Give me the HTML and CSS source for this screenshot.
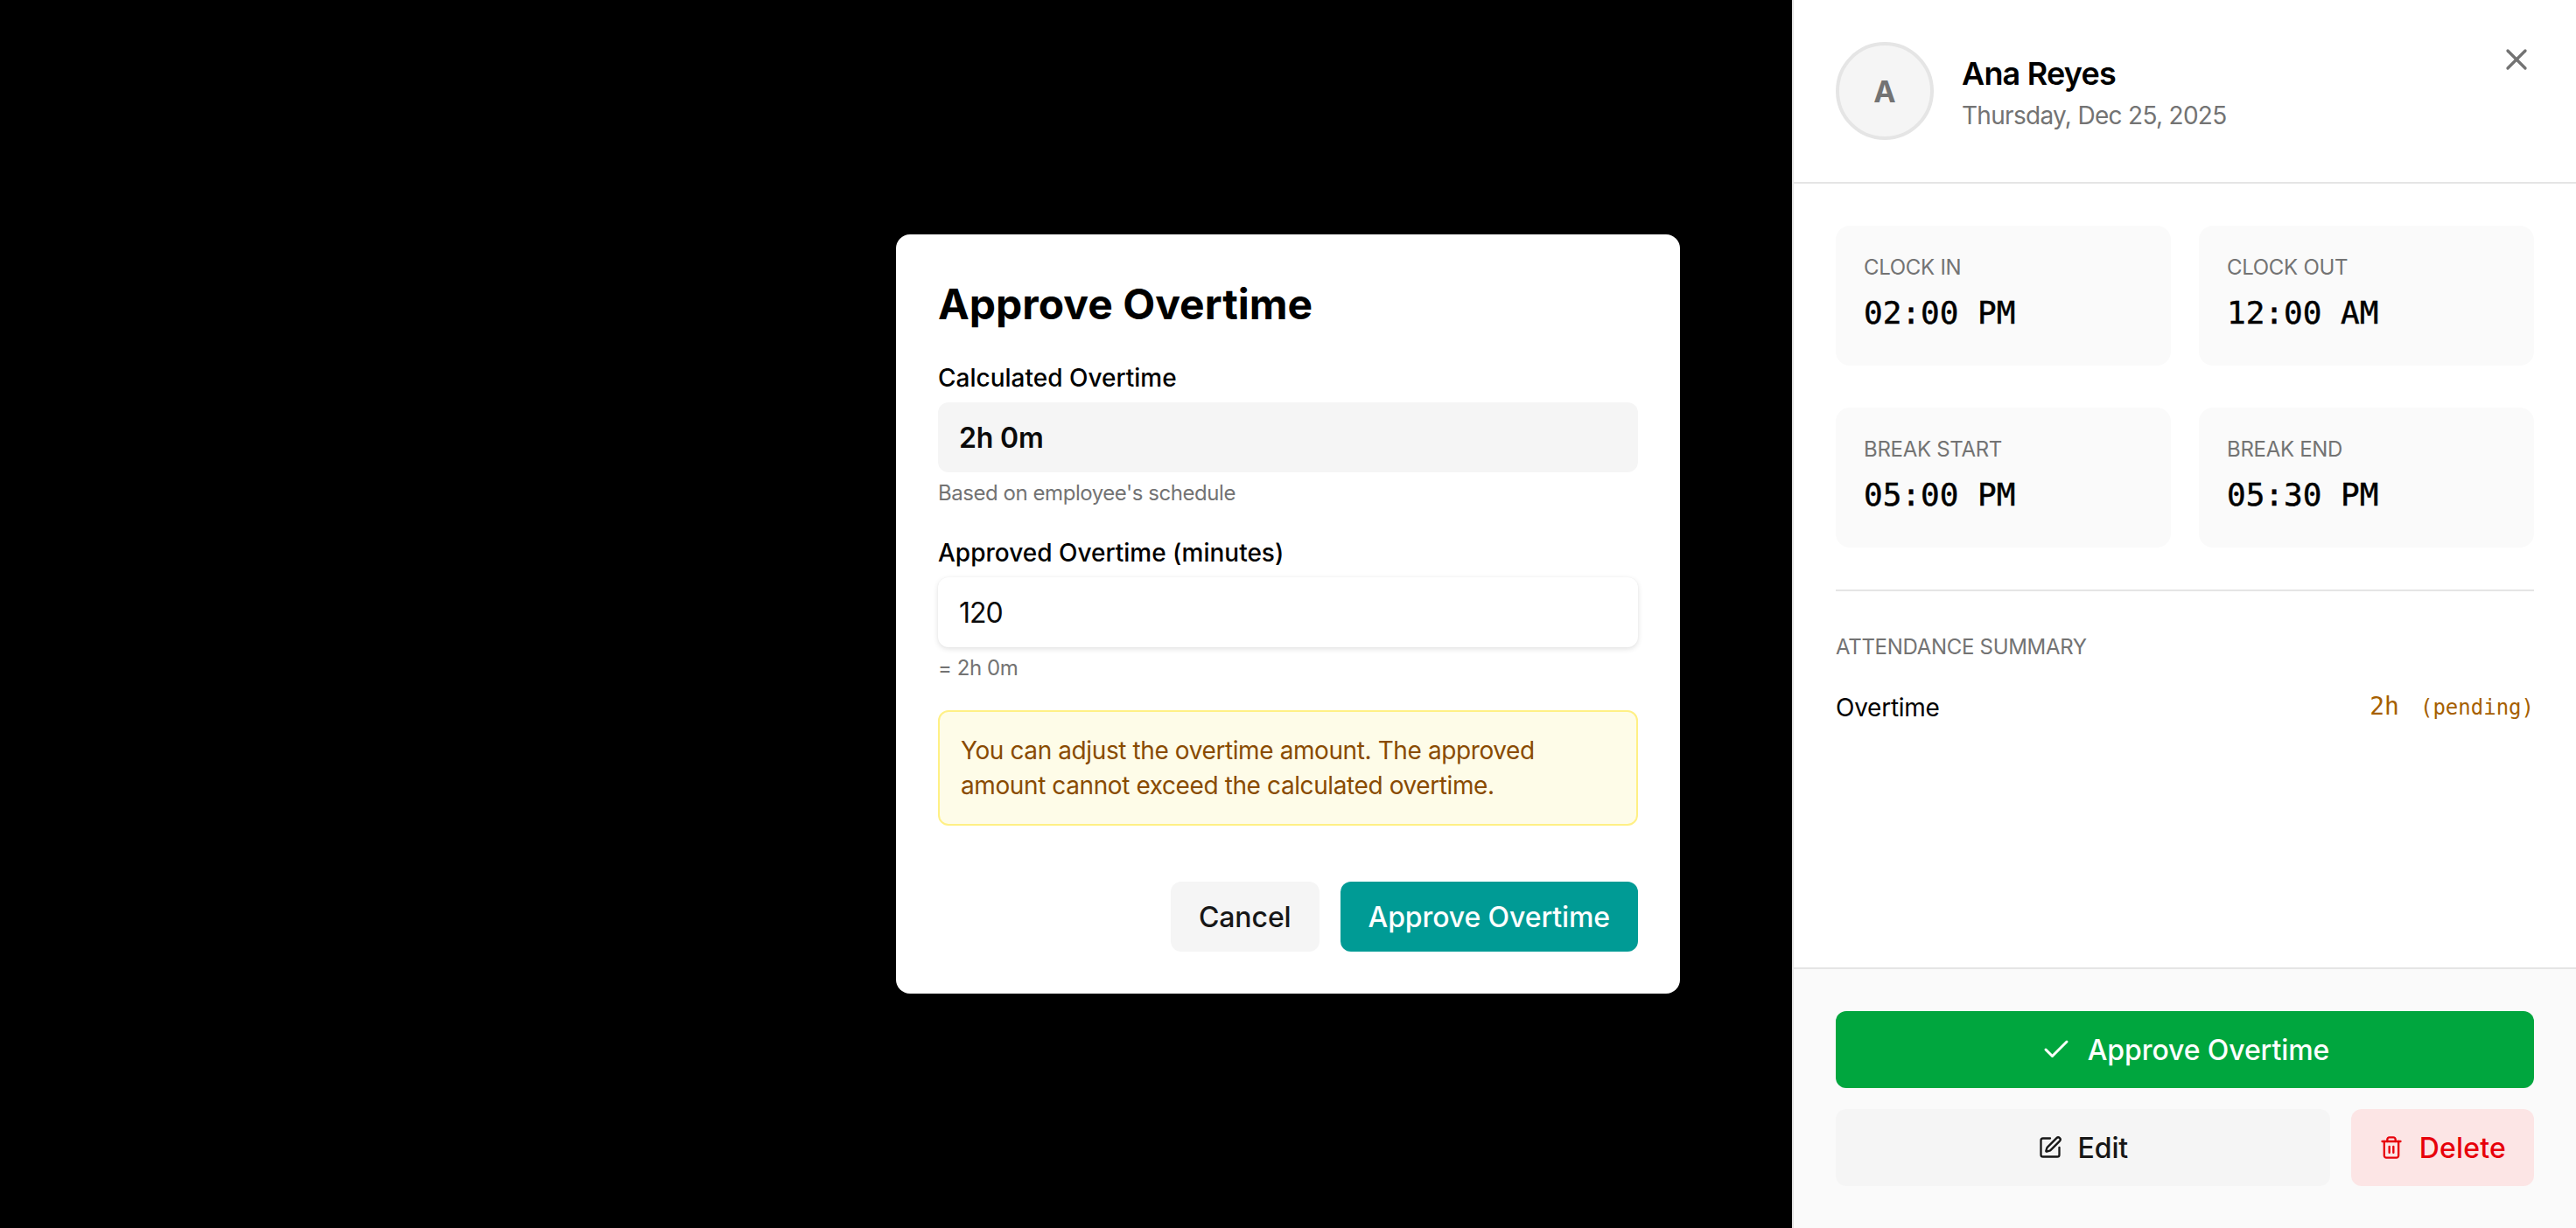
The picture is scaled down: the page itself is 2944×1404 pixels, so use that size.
FILE: index.html
```html
<!DOCTYPE html>
<html lang="en">
<head>
  <meta charset="UTF-8" />
  <title>Approve Overtime</title>
  <link rel="stylesheet" href="styles.css">
</head>
<body>
  <div class="overlay">
    <div class="modal">
      <h2>Approve Overtime</h2>

      <label class="field-label">Calculated Overtime</label>
      <div class="calc-box">2h 0m</div>
      <p class="hint">Based on employee's schedule</p>

      <label class="field-label label-gap" for="approved">Approved Overtime (minutes)</label>
      <input class="minutes" type="text" id="approved" value="120">
      <p class="hint">= 2h 0m</p>

      <div class="notice">You can adjust the overtime amount. The approved amount cannot exceed the calculated overtime.</div>

      <div class="modal-actions">
        <button class="btn btn-gray btn-cancel">Cancel</button>
        <button class="btn btn-teal">Approve Overtime</button>
      </div>
    </div>
  </div>

  <aside class="panel">
    <header class="panel-head">
      <div class="avatar">A</div>
      <div>
        <div class="name">Ana Reyes</div>
        <div class="date">Thursday, Dec 25, 2025</div>
      </div>
      <svg class="close" viewBox="0 0 24 24"><path d="M18 6 6 18"/><path d="m6 6 12 12"/></svg>
    </header>

    <div class="panel-body">
      <div class="times">
        <div class="time-card">
          <div class="time-label">CLOCK IN</div>
          <div class="time-value">02:00 PM</div>
        </div>
        <div class="time-card">
          <div class="time-label">CLOCK OUT</div>
          <div class="time-value">12:00 AM</div>
        </div>
        <div class="time-card">
          <div class="time-label">BREAK START</div>
          <div class="time-value">05:00 PM</div>
        </div>
        <div class="time-card">
          <div class="time-label">BREAK END</div>
          <div class="time-value">05:30 PM</div>
        </div>
      </div>

      <div class="summary">
        <div class="summary-title">ATTENDANCE SUMMARY</div>
        <div class="summary-row">
          <span>Overtime</span>
          <span class="summary-value">2h<small>(pending)</small></span>
        </div>
      </div>
    </div>

    <footer class="panel-foot">
      <button class="btn btn-green">
        <svg class="icon-check" viewBox="0 0 24 24"><path d="M20 6 9 17l-5-5"/></svg>
        Approve Overtime
      </button>
      <div class="foot-row">
        <button class="btn btn-gray btn-edit">
          <svg class="icon" viewBox="0 0 24 24"><path d="M12 3H5a2 2 0 0 0-2 2v14a2 2 0 0 0 2 2h14a2 2 0 0 0 2-2v-7"/><path d="M18.375 2.625a1 1 0 0 1 3 3l-9.013 9.014a2 2 0 0 1-.853.505l-2.873.84a.5.5 0 0 1-.62-.62l.84-2.873a2 2 0 0 1 .506-.852z"/></svg>
          Edit
        </button>
        <button class="btn btn-red">
          <svg class="icon" viewBox="0 0 24 24"><path d="M3 6h18"/><path d="M19 6v14c0 1-1 2-2 2H7c-1 0-2-1-2-2V6"/><path d="M8 6V4c0-1 1-2 2-2h4c1 0 2 1 2 2v2"/><path d="M10 11v6"/><path d="M14 11v6"/></svg>
          Delete
        </button>
      </div>
    </footer>
  </aside>
</body>
</html>
```

FILE: styles.css
```css
* {
  box-sizing: border-box;
}

html, body {
  height: 100%;
}

body {
  margin: 0;
  background: #000;
  color: #0a0a0a;
  font-family: Inter, 'Noto Sans', sans-serif;
  display: flex;
  justify-content: flex-end;
}

svg {
  fill: none;
  stroke: currentColor;
  stroke-width: 2;
  stroke-linecap: round;
  stroke-linejoin: round;
  flex-shrink: 0;
}

/* Modal */
.overlay {
  position: fixed;
  inset: 0;
  display: flex;
  align-items: center;
  justify-content: center;
}

.modal {
  width: 896px;
  background: #fff;
  border-radius: 16px;
  padding: 48px;
}

.modal h2 {
  margin: 0 0 32px;
  font-size: 48px;
  line-height: 64px;
  font-weight: 700;
  color: #000;
}

.field-label {
  display: block;
  margin-bottom: 8px;
  font-size: 28px;
  line-height: 40px;
  font-weight: 500;
  color: #000;
}

.label-gap {
  margin-top: 32px;
}

.calc-box {
  height: 80px;
  padding: 0 24px;
  display: flex;
  align-items: center;
  background: #f5f5f5;
  border-radius: 12px;
  font-size: 32px;
  font-weight: 600;
  letter-spacing: -0.2px;
}

.hint {
  margin: 8px 0 0;
  font-size: 24px;
  line-height: 32px;
  letter-spacing: -0.45px;
  color: #737373;
}

.minutes {
  display: block;
  width: 100%;
  height: 80px;
  padding: 0 24px;
  border: 0;
  outline: 0;
  border-radius: 12px;
  background: #fff;
  box-shadow: 0 2px 6px rgba(0, 0, 0, 0.12), 0 0 2px rgba(0, 0, 0, 0.04);
  font-family: inherit;
  font-size: 32px;
  letter-spacing: -1px;
  color: #0a0a0a;
}

.notice {
  margin-top: 32px;
  padding: 24px;
  background: #fefce8;
  border: 2px solid #fff085;
  border-radius: 12px;
  font-size: 28px;
  line-height: 40px;
  letter-spacing: -0.4px;
  color: #894b00;
}

.modal-actions {
  margin-top: 64px;
  display: flex;
  justify-content: flex-end;
  gap: 24px;
}

/* Buttons */
.btn {
  height: 80px;
  padding: 0 32px;
  border: 0;
  border-radius: 12px;
  display: flex;
  align-items: center;
  justify-content: center;
  gap: 18px;
  font-family: inherit;
  font-size: 32px;
  font-weight: 500;
  letter-spacing: -0.1px;
}

.btn-gray {
  background: #f5f5f5;
  color: #171717;
}

.btn-teal {
  background: #009b95;
  color: #fff;
}

.btn-green {
  width: 100%;
  height: 88px;
  background: #00a63e;
  color: #fff;
}

.btn-edit {
  flex: 1;
  height: 88px;
}

.btn-red {
  height: 88px;
  background: #fce5e5;
  color: #e7000b;
  letter-spacing: 0.2px;
}

.icon {
  width: 28px;
  height: 28px;
}

.icon-check {
  width: 36px;
  height: 36px;
}

/* Side panel */
.panel {
  position: relative;
  width: 896px;
  height: 100%;
  background: #fff;
  border-left: 2px solid #e5e5e5;
  display: flex;
  flex-direction: column;
}

.panel-head {
  padding: 48px;
  border-bottom: 2px solid #e5e5e5;
  display: flex;
  align-items: center;
  gap: 32px;
}

.avatar {
  width: 112px;
  height: 112px;
  border-radius: 50%;
  background: #f5f5f5;
  border: 4px solid #e5e5e5;
  display: flex;
  align-items: center;
  justify-content: center;
  font-size: 34px;
  font-weight: 700;
  color: #737373;
}

.name {
  font-size: 36px;
  line-height: 56px;
  font-weight: 600;
  letter-spacing: -0.8px;
  color: #000;
}

.date {
  font-size: 28px;
  line-height: 40px;
  letter-spacing: -0.7px;
  color: #737373;
}

.close {
  position: absolute;
  top: 48px;
  right: 48px;
  width: 40px;
  height: 40px;
  color: #737373;
}

.panel-body {
  flex: 1;
  padding: 48px;
}

.times {
  display: grid;
  grid-template-columns: 1fr 1fr;
  gap: 48px 32px;
}

.time-card {
  padding: 32px;
  background: #fafafa;
  border-radius: 16px;
}

.time-label {
  font-size: 24px;
  line-height: 32px;
  letter-spacing: -0.3px;
  color: #737373;
}

.time-value {
  margin-top: 8px;
  font-family: 'DejaVu Sans Mono', monospace;
  font-size: 36px;
  line-height: 56px;
  -webkit-text-stroke: 0.5px #000;
  color: #000;
}

.summary {
  margin-top: 48px;
  padding-top: 48px;
  border-top: 2px solid #e5e5e5;
}

.summary-title {
  font-size: 24px;
  line-height: 32px;
  letter-spacing: -0.3px;
  color: #737373;
}

.summary-row {
  margin-top: 32px;
  display: flex;
  justify-content: space-between;
  align-items: center;
  font-size: 28px;
  line-height: 40px;
  letter-spacing: -0.25px;
  color: #000;
}

.summary-value {
  font-family: 'DejaVu Sans Mono', monospace;
  letter-spacing: 0;
  color: #a65f00;
}

.summary-value small {
  margin-left: 24px;
  font-size: 24px;
}

.panel-foot {
  padding: 48px;
  background: #fafafa;
  border-top: 2px solid #e5e5e5;
  display: flex;
  flex-direction: column;
  gap: 24px;
}

.foot-row {
  display: flex;
  gap: 24px;
}
```
